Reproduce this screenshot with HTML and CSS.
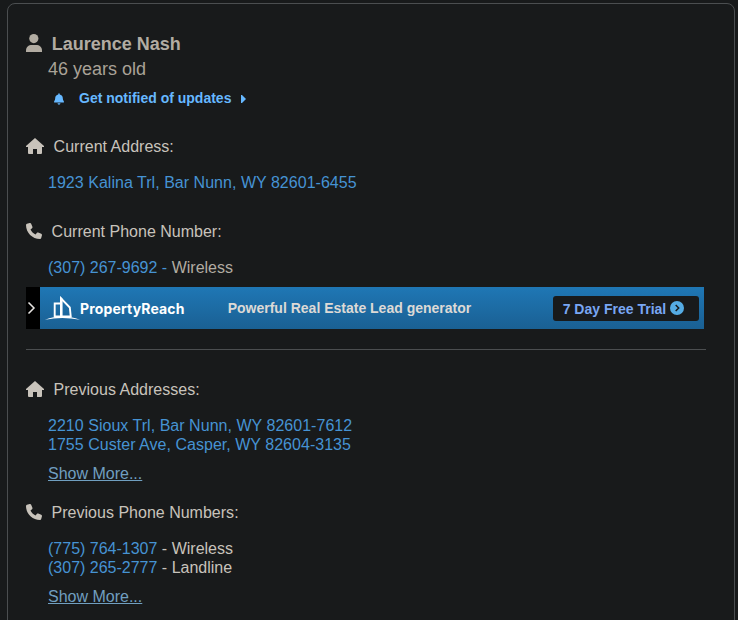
FILE: index.html
```html
<!DOCTYPE html>
<html lang="en">
<head>
<meta charset="utf-8">
<title>Laurence Nash</title>
<link rel="stylesheet" href="styles.css">
</head>
<body>
<svg class="defs" width="0" height="0">
  <symbol id="house" viewBox="0 0 18 16"><path d="M9 0L18 8v1h-2v6q0 1-1 1h-3.500q-.5 0-.5-.5V11H7v4.500q0 .5-.5.500H3q-1 0-1-1V9H0V8z"/></symbol>
  <symbol id="phone" viewBox="0 0 512 512"><path d="M164.900 24.600c-7.700-18.600-28-28.500-47.400-23.200l-88 24C12.100 30.200 0 46 0 64c0 247.400 200.600 448 448 448 18 0 33.800-12.100 38.600-29.500l24-88c5.300-19.400-4.600-39.700-23.200-47.400l-96-40c-16.300-6.800-35.200-2.100-46.300 11.600L304.700 368C234.300 334.700 177.300 277.700 144 207.300l49.300-40.400c13.700-11.200 18.400-30 11.600-46.300z"/></symbol>
</svg>
<main class="card">
  <h1 class="name"><svg class="icon-user" viewBox="0 0 16 18"><circle cx="7.800" cy="4.600" r="4.600"/><path d="M0 18v-1.500C0 13 2.500 11 6 11h4c3.500 0 6 2 6 5.500V18z"/></svg>Laurence Nash</h1>
  <p class="age">46 years old</p>
  <a class="notify"><svg class="icon-bell" viewBox="0 0 448 512"><path d="M224 0c-17.700 0-32 14.300-32 32v19.200C109 66 54 130.600 54 208v18.800c0 47-12.300 92.400-43.500 127.600l-4.400 8.300C-6 378-3 416 32 416h384c35 0 38-38 25.900-53.300l-4.400-8.300C406.300 319.200 394 273.900 394 226.800V208c0-77.400-55-142-138-156.800V32c0-17.700-14.300-32-32-32zM288 448H160c0 36 28 64 64 64s64-28 64-64z"/></svg>Get notified of updates<svg class="icon-caret" viewBox="0 0 5 8"><path d="M0 0h1l4 4-4 4H0z"/></svg></a>

  <section class="current-address">
    <h2 class="heading"><svg class="icon-house"><use href="#house"/></svg>Current Address:</h2>
    <p class="line address"><a>1923 Kalina Trl, Bar Nunn, WY 82601-6455</a></p>
  </section>
  <section class="current-phone">
    <h2 class="heading"><svg class="icon-phone"><use href="#phone"/></svg>Current Phone Number:</h2>
    <p class="line muted"><a>(307) 267-9692 - </a>Wireless</p>
  </section>

  <div class="banner">
    <div class="banner-tab"><svg viewBox="0 0 14 42"><path d="M2.500 15.500L8 21l-5.500 5.500"/></svg></div>
    <svg class="logo" viewBox="0 0 35 24"><path class="logo-lines" d="M9.700 21V7.500H15M16.200 21V2.500L24.800 11.500 25.800 21M9.500 20.500h17"/><path d="M15 0l2.500 2.500v18H15zM0 23.800Q17 16.500 35 23.800 17 20.300 0 23.800z"/></svg>
    <span class="brand">PropertyReach</span>
    <span class="slogan">Powerful Real Estate Lead generator</span>
    <a class="trial">7 Day Free Trial<svg viewBox="0 0 14 14"><circle cx="7" cy="7" r="7"/><path d="M5.700 4l3 3-3 3"/></svg></a>
  </div>
  <hr class="rule">

  <section class="previous-addresses">
    <h2 class="heading"><svg class="icon-house"><use href="#house"/></svg>Previous Addresses:</h2>
    <p class="line address"><a>2210 Sioux Trl, Bar Nunn, WY 82601-7612</a></p>
    <p class="line address"><a>1755 Custer Ave, Casper, WY 82604-3135</a></p>
    <a class="more">Show More...</a>
  </section>
  <section class="previous-phones">
    <h2 class="heading"><svg class="icon-phone"><use href="#phone"/></svg>Previous Phone Numbers:</h2>
    <p class="line"><a>(775) 764-1307</a> - Wireless</p>
    <p class="line"><a>(307) 265-2777</a> - Landline</p>
    <a class="more">Show More...</a>
  </section>
</main>
</body>
</html>
```
FILE: styles.css
```css
* { box-sizing: border-box; }
html, body { height: 100%; overflow: hidden; }
body {
  margin: 0;
  padding: 3px 3px 0 7px;
  background: #181a1b;
  color: #c8c3bb;
  font-family: "Liberation Sans", Arial, sans-serif;
  font-size: 16px;
}
.defs { position: absolute; }
h1, h2, p { margin: 0; font-weight: normal; }
svg { fill: currentColor; flex: none; }

.card {
  height: 640px;
  padding: 28px 28px 0 18px;
  border: 1px solid #4b4e50;
  border-radius: 8px;
}

.name {
  display: flex;
  align-items: center;
  height: 25px;
  font-size: 18px;
  font-weight: bold;
  color: #b2aca2;
}
.icon-user { width: 16px; height: 18px; margin: -3px 9.700px 0 0; }
.age {
  padding-left: 22px;
  font-size: 18px;
  line-height: 25px;
  color: #a9a297;
}
.notify {
  display: flex;
  align-items: center;
  height: 20px;
  margin: 6px 0 0 28px;
  font-size: 14px;
  font-weight: bold;
  color: #66b8ff;
}
.icon-bell { width: 10px; height: 12px; margin: 2px 15px 0 0; }
.icon-caret { width: 5px; height: 8px; margin: 2px 0 0 10px; }

.heading {
  display: flex;
  align-items: center;
  height: 20px;
  margin-bottom: 16px;
  font-size: 16px;
  letter-spacing: 0.01px;
}
.icon-house { width: 18px; height: 16px; margin: -2px 9.600px 0 0; }
.icon-phone { width: 16px; height: 16px; margin: -2px 9.600px 0 0; }
.line { padding-left: 22px; line-height: 19px; }
.line a { color: #4693d3; }
.address { letter-spacing: 0.03px; }
.muted { color: #b2aca2; }
.more {
  display: block;
  margin: 10px 0 0 22px;
  line-height: 19px;
  color: #709fc0;
  text-decoration: underline;
}
.current-address { margin-top: 29px; }
.current-phone { margin-top: 30px; }
.previous-addresses { margin-top: 30px; }
.previous-phones { margin-top: 20px; }

.banner {
  display: flex;
  align-items: center;
  width: 678px;
  height: 42px;
  margin-top: 10px;
  padding-right: 5px;
  background: linear-gradient(#1f77b5, #1a6093);
}
.banner-tab { width: 14px; height: 42px; background: #000; }
.banner-tab svg {
  display: block;
  fill: none;
  stroke: #e8e6e3;
  stroke-width: 1.5;
}
.logo { width: 35px; height: 24px; margin: 0 0 0 5px; color: #fff; }
.logo-lines { fill: none; stroke: #fff; stroke-width: 1.9; }
.brand {
  width: 147.700px;
  color: #fff;
  font: 700 14px Inter, sans-serif;
  letter-spacing: 0.15px;
}
.slogan { font-size: 14px; font-weight: bold; color: #dddad6; }
.trial {
  display: flex;
  align-items: center;
  width: 146px;
  height: 25px;
  margin-left: auto;
  padding: 1px 0 0 9.700px;
  border-radius: 3px;
  background: #181a1b;
  color: #79a7f3;
  font-size: 14px;
  font-weight: bold;
}
.trial svg { width: 14px; height: 14px; margin: -2px 0 0 3.500px; }
.trial circle { fill: #55ace4; }
.trial path { fill: none; stroke: #181a1b; stroke-width: 1.5; }
.rule {
  width: 680px;
  height: 1px;
  margin: 20px 0 0;
  border: 0;
  background: #4b4e50;
}
```
